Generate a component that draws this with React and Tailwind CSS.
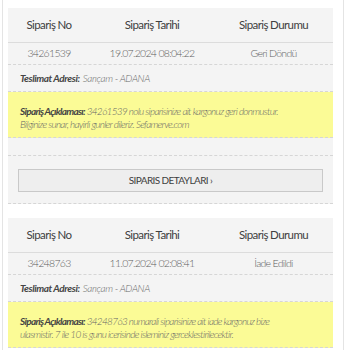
import React from "react";

const orders = [
  {
    no: "34261539",
    date: "19.07.2024 08:04:22",
    status: "Geri Döndü",
    address: "Sarıçam - ADANA",
    lines: [
      "34261539 nolu siparisinize ait kargonuz geri donmustur.",
      "Bilginize sunar, hayirli gunler dileriz. Sefamerve.com",
    ],
    button: true,
  },
  {
    no: "34248763",
    date: "11.07.2024 02:08:41",
    status: "İade Edildi",
    address: "Sarıçam - ADANA",
    lines: [
      "34248763 numarali siparisinize ait iade kargonuz bize",
      "ulasmistir. 7 ile 10 is gunu icerisinde isleminiz gerceklestirilecektir.",
    ],
    button: false,
  },
];

function OrderCard({ order }) {
  return (
    <div className="w-[325px] bg-[#f4f4f4]">
      {/* header */}
      <div className="grid grid-cols-[82px_124px_119px] h-[35px] items-center border-b border-[#dcdcdc] text-[11.5px] text-[#404040] tracking-[-0.6px]">
        <div className="text-center">Sipariş No</div>
        <div className="text-center">Sipariş Tarihi</div>
        <div className="text-center">Sipariş Durumu</div>
      </div>

      {/* values */}
      <div className="grid grid-cols-[82px_124px_119px] h-[22px] items-center border-b border-dashed border-[#d6d6d6] text-[10.5px] font-light text-[#5e5e5e] tracking-[-0.7px] whitespace-nowrap">
        <div className="text-center">{order.no}</div>
        <div className="text-center">{order.date}</div>
        <div className="text-center">{order.status}</div>
      </div>

      {/* address */}
      <div className="h-[27px] flex items-center px-[12px] border-b border-dashed border-[#d6d6d6] text-[10px] italic text-[#444] tracking-[-0.4px]">
        <span className="font-bold">Teslimat Adresi:</span>
        <span className="ml-[3px] font-light text-[#6a6a6a]">{order.address}</span>
      </div>

      {/* note */}
      <div className="bg-[#fbfb96] px-[12px] pt-[13px] pb-[6px] border-b border-dashed border-[#d6d6d6] text-[10px] leading-[13px] italic text-[#666] tracking-[-0.7px] whitespace-nowrap">
        <div>
          <span className="font-bold text-[#444]">Sipariş Açıklaması:</span>{" "}
          <span className="font-light">{order.lines[0]}</span>
        </div>
        <div className="font-light">{order.lines[1]}</div>
      </div>

      {order.button && (
        <>
          <div className="h-[18px] border-b border-dashed border-[#d6d6d6]" />
          <div className="px-[10px] pt-[10px] pb-[11px] border-b border-dashed border-[#d6d6d6]">
            <button className="w-full h-[23px] bg-[#eeeeee] border border-[#c9c9c9] text-[10px] text-[#404040] tracking-[-0.6px]">
              SIPARIS DETAYLARI ›
            </button>
          </div>
        </>
      )}
    </div>
  );
}

export default function App() {
  return (
    <div
      className="ml-[2px] w-[342px] min-h-[350px] bg-white border-x border-[#e4e4e4] pl-[5px] pt-[8px] flex flex-col gap-[14px]"
      style={{ fontFamily: "Lato, 'Noto Sans', sans-serif" }}
    >
      {orders.map((o) => (
        <OrderCard key={o.no} order={o} />
      ))}
    </div>
  );
}
